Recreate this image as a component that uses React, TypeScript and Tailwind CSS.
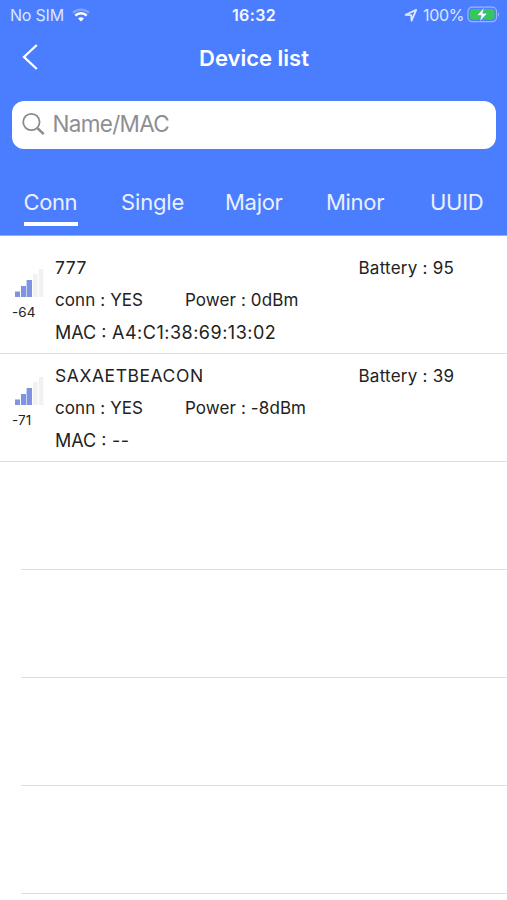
import React from 'react'

interface Device {
  name: string
  rssi: number
  battery: number
  power: string
  mac: string
}

const tabs = [
  { name: 'Conn', pos: 'ml-[23.5px] w-[54.5px] tracking-[-0.4px]' },
  { name: 'Single', pos: 'ml-[43px] w-[63px] tracking-[-0.15px]' },
  { name: 'Major', pos: 'ml-[41px] w-[58px] tracking-[-0.3px]' },
  { name: 'Minor', pos: 'ml-[43px] w-[58px] tracking-[-0.3px]' },
  { name: 'UUID', pos: 'ml-[46px] w-[54px] tracking-[-0.3px]' },
]

const devices: Device[] = [
  { name: '777', rssi: -64, battery: 95, power: '0dBm', mac: 'A4:C1:38:69:13:02' },
  { name: 'SAXAETBEACON', rssi: -71, battery: 39, power: '-8dBm', mac: '--' },
]

function StatusBar() {
  return (
    <div className="flex h-[30px] items-center pl-[10px] pr-[6px] text-[16px] leading-[30px] text-[#dce6ff]">
      <div className="flex w-[222px] items-center">
        <span className="w-[54px] tracking-[-0.2px]">No SIM</span>
        <svg className="ml-[8px]" width="18" height="14" viewBox="0 0 18 14" fill="none">
          <path d="M1 4.8 A11.5 11.5 0 0 1 17 4.8" stroke="#7fa3ff" strokeWidth="2.3" />
          <path d="M3.3 7.6 A8.2 8.2 0 0 1 14.7 7.6" stroke="#fff" strokeWidth="2.5" />
          <path d="M9 13.6 L6 10.6 A4.6 4.6 0 0 1 12 10.6 Z" fill="#fff" />
        </svg>
      </div>
      <span className="w-[46px] font-semibold tracking-[0.35px] text-[#f4f7ff]">16:32</span>
      <div className="ml-auto flex items-center">
        <svg className="mr-[5px]" width="14" height="14" viewBox="0 0 14 14" fill="none">
          <path d="M1.6 6.8 L12.2 1.9 L7.6 12.6 L7.2 7.2 Z" stroke="#dce6ff" strokeWidth="1.8" strokeLinejoin="round" />
        </svg>
        <span className="w-[42px] tracking-[-0.35px]">100%</span>
        <svg className="ml-[2px]" width="34" height="18" viewBox="0 0 34 18" fill="none">
          <rect x="1" y="1.1" width="28.5" height="14.6" rx="4.2" stroke="#9ab6ff" strokeWidth="1.2" />
          <rect x="3" y="3.1" width="24.5" height="10.6" rx="2.2" fill="#35c759" />
          <path d="M31 6 Q33.2 8.5 31 10.8 Z" fill="#9ab6ff" />
          <path d="M17.2 1.5 L9.8 9.5 H14.2 L12.8 15.5 L20.4 7.3 H15.8 Z" fill="#fff" stroke="#4b7dff" strokeWidth="0.5" />
        </svg>
      </div>
    </div>
  )
}

function Signal() {
  return (
    <svg width="30" height="30" viewBox="0 0 30 30">
      <rect x="1" y="23.5" width="5" height="5.5" fill="#7f93e0" />
      <rect x="7" y="18" width="5" height="11" fill="#7f93e0" />
      <rect x="12.6" y="12" width="5.4" height="17" fill="#7f93e0" />
      <rect x="19" y="6" width="4.6" height="23" fill="#f1f1f2" />
      <rect x="24.8" y="1" width="4.6" height="28" fill="#f1f1f2" />
    </svg>
  )
}

function DeviceRow({ device }: { device: Device }) {
  return (
    <div className="flex h-[108px] border-b border-[#dedede] pt-[6px] text-[17px] text-[#222]">
      <div className="flex w-[55px] flex-col pt-[16px]">
        <div className="pl-[14px]"><Signal /></div>
        <span className="pl-[12px] pt-px text-[13.5px] leading-[26px] tracking-[0.1px]">{device.rssi}</span>
      </div>
      <div className="flex flex-1 flex-col leading-[32px]">
        <div className="flex">
          <span className="w-[303.5px] text-[17.5px] tracking-[0.56px]">{device.name}</span>
          <span className="tracking-[0.25px]">Battery : {device.battery}</span>
        </div>
        <div className="flex tracking-[0.1px]">
          <span className="w-[130px]">conn : YES</span>
          <span>Power : {device.power}</span>
        </div>
        <div className="flex text-[18px] leading-[33px]">
          <span className="w-[57px]">MAC :</span>
          <span className="tracking-[0.5px]">{device.mac}</span>
        </div>
      </div>
    </div>
  )
}

export default function App() {
  return (
    <div className="h-[900px] w-[507px] overflow-hidden whitespace-nowrap bg-white font-['Inter','Liberation_Sans',sans-serif]">
      <header className="h-[236px] border-b border-[#90b0ff] bg-[#4b7dff] text-white">
        <StatusBar />
        <div className="flex h-[56px] items-center">
          <svg className="-mt-[2px] ml-[21px]" width="18" height="28" viewBox="0 0 18 28" fill="none">
            <path d="M15.8 2 L3 14 L15.8 26" stroke="#fff" strokeWidth="2.3" />
          </svg>
          <h1 className="ml-[160px] text-[22px] font-semibold">Device list</h1>
        </div>
        <div className="mx-[12px] mt-[15px] flex h-[48px] w-[484px] items-center rounded-[12px] bg-white text-[#8e8e93]">
          <svg className="ml-[9px]" width="26" height="26" viewBox="0 0 26 26" fill="none" stroke="#8a8a8d">
            <circle cx="10.4" cy="10" r="8.2" strokeWidth="1.8" />
            <path d="M16.5 16.1 L22.7 22.2" strokeWidth="2.5" />
          </svg>
          <span className="-mt-[2px] ml-[5.5px] text-[22.5px] tracking-[-0.68px]">Name/MAC</span>
        </div>
        <div className="mt-[37px] flex text-[22px] leading-[32px] text-[#eaf0ff]">
          {tabs.map((tab, i) => (
            <div key={tab.name} className={tab.pos}>
              {tab.name}
              {i === 0 && <div className="mt-[4px] h-[4px] bg-white" />}
            </div>
          ))}
        </div>
      </header>

      <main className="pt-[10px]">
        {devices.map((device) => (
          <DeviceRow key={device.name} device={device} />
        ))}
        {[0, 1, 2, 3].map((n) => (
          <div key={n} className="ml-[21px] h-[108px] border-b border-[#dedede]" />
        ))}
      </main>
    </div>
  )
}
